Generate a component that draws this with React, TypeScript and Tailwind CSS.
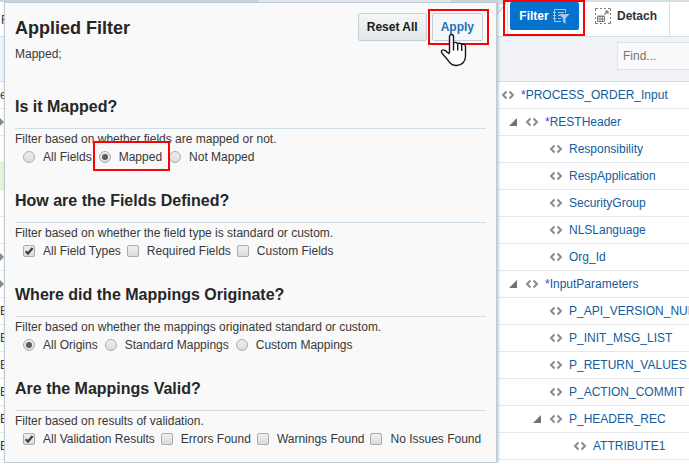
import type { ReactNode } from "react";

type Option = { label: string; checked?: boolean; marked?: boolean };
type Section = { id: string; title: string; hint: string; kind: "radio" | "checkbox"; options: Option[] };

const sections: Section[] = [
  {
    id: "mapped",
    title: "Is it Mapped?",
    hint: "Filter based on whether fields are mapped or not.",
    kind: "radio",
    options: [{ label: "All Fields" }, { label: "Mapped", checked: true, marked: true }, { label: "Not Mapped" }],
  },
  {
    id: "defined",
    title: "How are the Fields Defined?",
    hint: "Filter based on whether the field type is standard or custom.",
    kind: "checkbox",
    options: [{ label: "All Field Types", checked: true }, { label: "Required Fields" }, { label: "Custom Fields" }],
  },
  {
    id: "origin",
    title: "Where did the Mappings Originate?",
    hint: "Filter based on whether the mappings originated standard or custom.",
    kind: "radio",
    options: [{ label: "All Origins", checked: true }, { label: "Standard Mappings" }, { label: "Custom Mappings" }],
  },
  {
    id: "valid",
    title: "Are the Mappings Valid?",
    hint: "Filter based on results of validation.",
    kind: "checkbox",
    options: [
      { label: "All Validation Results", checked: true },
      { label: "Errors Found" },
      { label: "Warnings Found" },
      { label: "No Issues Found" },
    ],
  },
];

type Node = { name: string; level: number; required?: boolean; open?: boolean };

const nodes: Node[] = [
  { name: "PROCESS_ORDER_Input", level: 0, required: true },
  { name: "RESTHeader", level: 1, required: true, open: true },
  { name: "Responsibility", level: 2 },
  { name: "RespApplication", level: 2 },
  { name: "SecurityGroup", level: 2 },
  { name: "NLSLanguage", level: 2 },
  { name: "Org_Id", level: 2 },
  { name: "InputParameters", level: 1, required: true, open: true },
  { name: "P_API_VERSION_NUMBER", level: 2 },
  { name: "P_INIT_MSG_LIST", level: 2 },
  { name: "P_RETURN_VALUES", level: 2 },
  { name: "P_ACTION_COMMIT", level: 2 },
  { name: "P_HEADER_REC", level: 2, open: true },
  { name: "ATTRIBUTE1", level: 3 },
];

const indents = ["w-0", "w-6", "w-12", "w-[72px]"];

const edgeRows = ["e", ">", "", "#", "", "", ">", ">", "E", "E", "E", "E", "E", "E"];

function Marker({ className }: { className: string }) {
  return <span aria-hidden="true" className={`pointer-events-none absolute border-2 border-[#fb0007] ${className}`} />;
}

function Choice({ section, option }: { section: Section; option: Option }) {
  const round = section.kind === "radio";
  return (
    <label className="relative flex items-center gap-2">
      <span className="grid size-3 place-items-center">
        <input
          type={section.kind}
          name={section.id}
          defaultChecked={option.checked}
          className={`peer col-start-1 row-start-1 size-3 appearance-none border border-[#acacac] bg-linear-to-b from-[#eeeeee] to-[#dcdcdc] ${round ? "rounded-full" : "rounded-xs"}`}
        />
        {round ? (
          <span className="pointer-events-none z-10 col-start-1 row-start-1 hidden size-1.5 rounded-full bg-[#5c5c5c] peer-checked:block" />
        ) : (
          <svg viewBox="0 0 12 12" className="pointer-events-none z-10 col-start-1 row-start-1 hidden size-3 peer-checked:block">
            <path d="M2.7 6.2 5 8.5 9.6 3" fill="none" stroke="#3f3f3f" strokeWidth="2.2" />
          </svg>
        )}
      </span>
      {option.label}
      {option.marked && <Marker className="-top-2 -right-2 -bottom-1.5 -left-1.5 z-20" />}
    </label>
  );
}

function HandCursor() {
  return (
    <svg viewBox="0 0 28 34" className="pointer-events-none absolute top-5 left-2 z-20 h-[34px] w-7" aria-hidden="true">
      <path
        d="M9.500 20V3.500c0-2.700 4-2.700 4 0V11c0-2.400 4.200-2 4.200.6 0-2.200 4-1.600 4 .9 0-2 3.800-1.500 3.800 1V23c0 5.500-3.500 9.500-8.700 9.500-4 0-6.800-1.900-8.800-5.200L2 20.200c-1.600-2.700.8-4.200 3.300-2.600L9.500 21"
        fill="white"
        stroke="#171728"
        strokeWidth="1.400"
        strokeLinejoin="round"
      />
      <path d="M13.500 11v6.500M17.700 12v5.500M21.700 13v5" fill="none" stroke="#171728" strokeWidth="1.400" />
    </svg>
  );
}

function FilterIcon() {
  return (
    <svg viewBox="0 0 17 16" className="h-4 w-[17px]" aria-hidden="true" fill="none" stroke="#a4c8e9">
      <path d="M12.500 5V1.500h-11v12H8M0 4.500h3M0 7.500h3M0 10.500h3M5 4.500h6M5 7.500h2M5 10.500h3" />
      <path d="M6 6h10.500l-4 4.500V16L10 14v-3.500Z" fill="#a4c8e9" stroke="none" />
    </svg>
  );
}

function DetachIcon() {
  return (
    <svg viewBox="0 0 16 16" className="size-4" aria-hidden="true" fill="none" stroke="#7c7c7c">
      <path d="M.5 3V.5H3M5 .5h2M9 .5h2M13 .5h2.500V3M15.500 5v2M15.500 9v2M15.500 13v2.500H13M11 15.500H9M7 15.500H5M3 15.500H.5V13M.5 11V9M.5 7V5" />
      <path d="M2.500 8.500h7v5h-7ZM2.500 11h7M5 8.500v5M7.500 8.500v5M2.500 8h7" />
      <path d="m9.500 6.500 3-3" strokeWidth="1.300" />
      <path d="M9.500 2.500h4v4Z" fill="#7c7c7c" stroke="none" />
    </svg>
  );
}

function ElementIcon() {
  return (
    <svg viewBox="0 0 14 10" className="h-2.5 w-3.5 shrink-0" aria-hidden="true">
      <path d="M5.500 1.500 2 5l3.500 3.500M8.500 1.500 12 5 8.500 8.500" fill="none" stroke="#84898d" strokeWidth="1.900" />
    </svg>
  );
}

function Edge() {
  return (
    <div className="w-1 shrink-0 text-xs text-[#333]" aria-hidden="true">
      <div className="h-0.5 bg-[#c9d4da]" />
      <div className="flex h-[35px] items-center border-b border-[#d3dde4] pt-px pl-px">F</div>
      <div className="h-[45px] border-b border-[#d3dde4] bg-[#eef3fa]" />
      {edgeRows.map((mark, i) => (
        <div key={i} className={`flex h-[27px] items-center border-b border-[#e4e8ea] ${mark === "#" ? "bg-[#eaf3d5]" : ""}`}>
          {mark === ">" ? (
            <svg viewBox="0 0 4 8" className="h-2 w-1">
              <path d="M0 0 4 4 0 8Z" fill="#84898d" />
            </svg>
          ) : mark === "#" ? null : (
            mark
          )}
        </div>
      ))}
    </div>
  );
}

function PanelButton({ className, children }: { className: string; children: ReactNode }) {
  return (
    <button type="button" className={`h-7 rounded-xs border border-[#c4ced7] px-2 text-xs leading-4 font-bold ${className}`}>
      {children}
    </button>
  );
}

function FilterPanel() {
  return (
    <div className="z-10 w-[493px] shrink-0">
      <div className="flex h-0.5">
        <div className="w-[255px] bg-[#c9d4da]" />
        <div className="w-[192px] bg-[#e5e6ea]" />
        <div className="flex-1 bg-[#c9d4da]" />
      </div>
      <form className="border border-[#bfccd5] bg-[#f9f9f9] px-2.5 pb-[15px] text-xs text-[#383838] shadow-[1px_0_3px_#aab8c1]">
        <header className="flex h-[92px] items-start justify-between pt-2.5">
          <div>
            <h1 className="pt-[3px] text-lg leading-6 font-bold text-[#262626]">Applied Filter</h1>
            <p className="pt-1.5 leading-4">Mapped;</p>
          </div>
          <div className="flex gap-[5px] pr-[3px]">
            <PanelButton className="bg-linear-to-b from-[#f5f6f6] to-[#e4e8ea] text-[#1a1a1a]">Reset All</PanelButton>
            <div className="relative">
              <PanelButton className="bg-[#f5f8fa] text-[#2271b9]">Apply</PanelButton>
              <Marker className="-top-1 -right-1.5 -bottom-1 -left-1" />
              <HandCursor />
            </div>
          </div>
        </header>
        <div className="flex flex-col gap-6">
          {sections.map((s) => (
            <fieldset key={s.id}>
              <legend className="w-full border-b border-[#d2dee7] pt-0.5 pb-[11px] text-base leading-5 font-bold text-[#262626]">{s.title}</legend>
              <p className="pt-0.5 leading-4">{s.hint}</p>
              <div className={`flex pt-0.5 pl-2 leading-4 ${s.kind === "radio" ? "gap-[7px]" : "gap-1.5"}`}>
                {s.options.map((o) => (
                  <Choice key={o.label} section={s} option={o} />
                ))}
              </div>
            </fieldset>
          ))}
        </div>
      </form>
    </div>
  );
}

function TreePane() {
  return (
    <section className="min-w-0 flex-1 overflow-hidden">
      <div className="flex h-[37px] items-start border-t-2 border-b border-[#d3dde4]">
        <svg viewBox="0 0 10 14" className="h-3.5 w-2.5 shrink-0" aria-hidden="true">
          <path d="M0 1h9L0 13Z" fill="#f2f2f2" stroke="#b5bdc2" />
        </svg>
        <div className="flex h-full shrink-0 items-start border-l border-[#d3dde4] pl-0.5">
          <div className="relative">
            <button type="button" className="flex h-7 w-[69px] items-center justify-center gap-1 rounded-xs bg-[#0572ce] text-xs font-bold text-white">
              Filter
              <FilterIcon />
            </button>
            <Marker className="-top-0.5 -right-1.5 -bottom-1.5 -left-[7px]" />
          </div>
        </div>
        <button type="button" className="flex h-7 shrink-0 items-center gap-1.5 pl-4 text-xs font-bold text-[#333]">
          <DetachIcon />
          Detach
        </button>
        <div className="ml-auto h-full w-5 border-l border-[#d3dde4]" />
      </div>
      <div className="flex h-[45px] justify-end overflow-hidden border-b border-[#d3dde4] bg-[#f2f3f7] pt-[5px]">
        <input
          type="search"
          aria-label="Find"
          placeholder="Find..."
          className="h-7 w-[72px] border border-r-0 border-[#dde1e6] bg-[#fafafa] px-[5px] text-xs placeholder:text-[#757575]"
        />
      </div>
      <ul>
        {nodes.map((n) => (
          <li key={n.name} className="flex h-[27px] items-center border-b border-[#e6e9eb] pl-1">
            <span className={`flex shrink-0 justify-end ${indents[n.level]}`}>
              {n.open && (
                <svg viewBox="0 0 8 8" className="mr-2 size-2" aria-hidden="true">
                  <path d="M8 0v8H0Z" fill="#6e7377" />
                </svg>
              )}
            </span>
            <ElementIcon />
            <a href="#" className="pl-1.5 text-xs leading-4 whitespace-nowrap text-[#145c9e]">
              {n.required && <span className="text-[#3b3bff]">*</span>}
              {n.name}
            </a>
          </li>
        ))}
      </ul>
    </section>
  );
}

export default function App() {
  return (
    <main className="flex items-start bg-white font-['Liberation_Sans',Arial,sans-serif]">
      <Edge />
      <FilterPanel />
      <TreePane />
    </main>
  );
}
